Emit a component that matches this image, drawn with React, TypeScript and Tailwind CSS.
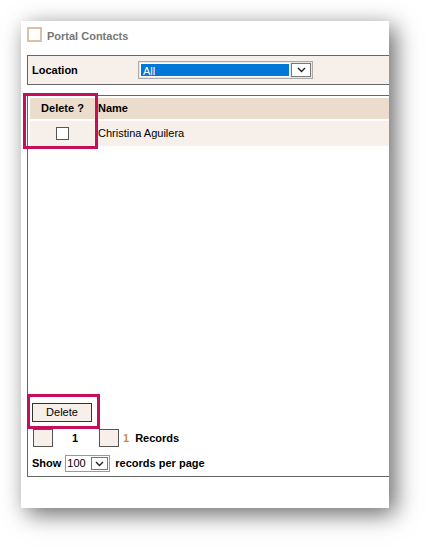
import React from "react";

function Chevron() {
  return (
    <svg width="9" height="6" viewBox="0 0 9 6" fill="none">
      <path d="M1 1 L4.5 4.5 L8 1" stroke="#222" strokeWidth="1.4" />
    </svg>
  );
}

export default function App() {
  return (
    <div className="w-[431px] h-[550px] bg-white relative" style={{ fontFamily: '"Liberation Sans", Arial, sans-serif' }}>
      <div className="absolute left-[21px] top-[21px] w-[368px] h-[487px] bg-white shadow-[6px_6px_22px_rgba(0,0,0,0.6)] pl-[6px] pt-[6px] flex flex-col overflow-hidden">
        {/* Title */}
        <div className="flex items-center h-[15px]">
          <div className="w-[15px] h-[15px] border-2 border-[#dcc0a4] box-border" />
          <span className="ml-[5px] mt-[3px] text-[11px] font-bold text-[#777]">Portal Contacts</span>
        </div>
        {/* Location */}
        <div className="mt-[13px] h-[30px] w-[370px] shrink-0 border-y border-l border-[#666] bg-[#f7efe9] flex items-center">
          <span className="ml-[4px] w-[106px] text-[11px] font-bold text-black">Location</span>
          <div className="flex h-[18px] w-[175px] border border-[#aaa] bg-[#e8e8e8] p-[1px]">
            <div className="flex-1 bg-[#0078d7] text-white text-[11px] leading-[15px] pl-[2px] border border-white">All</div>
            <div className="w-[20px] ml-[1px] bg-white border border-[#777] flex items-center justify-center">
              <Chevron />
            </div>
          </div>
        </div>
        {/* List box */}
        <div className="mt-[10px] h-[382px] w-[370px] shrink-0 border-y border-l border-[#666] flex flex-col">
          <table className="border-separate border-spacing-[2px] w-full text-[11px]">
            <thead>
              <tr className="h-[21px]">
                <th className="w-[65px] bg-[#ecdccb] font-bold text-center text-black">Delete ?</th>
                <th className="bg-[#ecdccb] font-bold text-left pl-[1px] text-black">Name</th>
              </tr>
            </thead>
            <tbody>
              <tr className="h-[25px]">
                <td className="bg-[#f7efe9] text-center">
                  <div className="mx-auto w-[13px] h-[13px] border border-[#555] bg-white" />
                </td>
                <td className="bg-[#f7efe9] pl-[1px] text-black">Christina Aguilera</td>
              </tr>
            </tbody>
          </table>
          <div className="flex-1" />
          <div className="pl-[4px]">
            <div className="w-[60px] h-[19px] border border-[#333] bg-[#f7efe9] text-[11px] text-black flex items-center justify-center">Delete</div>
          </div>
          <div className="flex items-center h-[18px] mt-[7px] pl-[5px] text-[11px] font-bold">
            <div className="w-[20px] h-[18px] border border-[#555] bg-[#f7efe9]" />
            <span className="ml-[19px] w-[27px] text-black">1</span>
            <div className="w-[20px] h-[18px] border border-[#555] bg-[#f7efe9]" />
            <span className="ml-[4px] text-[#d08a4a]">1</span>
            <span className="ml-[6px] text-black">Records</span>
          </div>
          <div className="flex items-center h-[17px] mt-[8px] mb-[4px] pl-[4px] text-[11px] font-bold">
            <span className="text-black">Show</span>
            <div className="ml-[4px] flex h-[17px] w-[45px] border border-[#999] bg-white">
              <span className="flex-1 font-normal text-black leading-[14px] pl-[1px]">100</span>
              <div className="w-[17px] m-[1px] border border-[#777] flex items-center justify-center">
                <Chevron />
              </div>
            </div>
            <span className="ml-[5px] text-black">records per page</span>
          </div>
        </div>
      </div>
      {/* highlight overlays */}
      <div className="absolute left-[23px] top-[93px] w-[75px] h-[56px] border-[3px] border-[#c4105a]" />
      <div className="absolute left-[27px] top-[394px] w-[73px] h-[35px] border-[3px] border-[#c4105a]" />
    </div>
  );
}
